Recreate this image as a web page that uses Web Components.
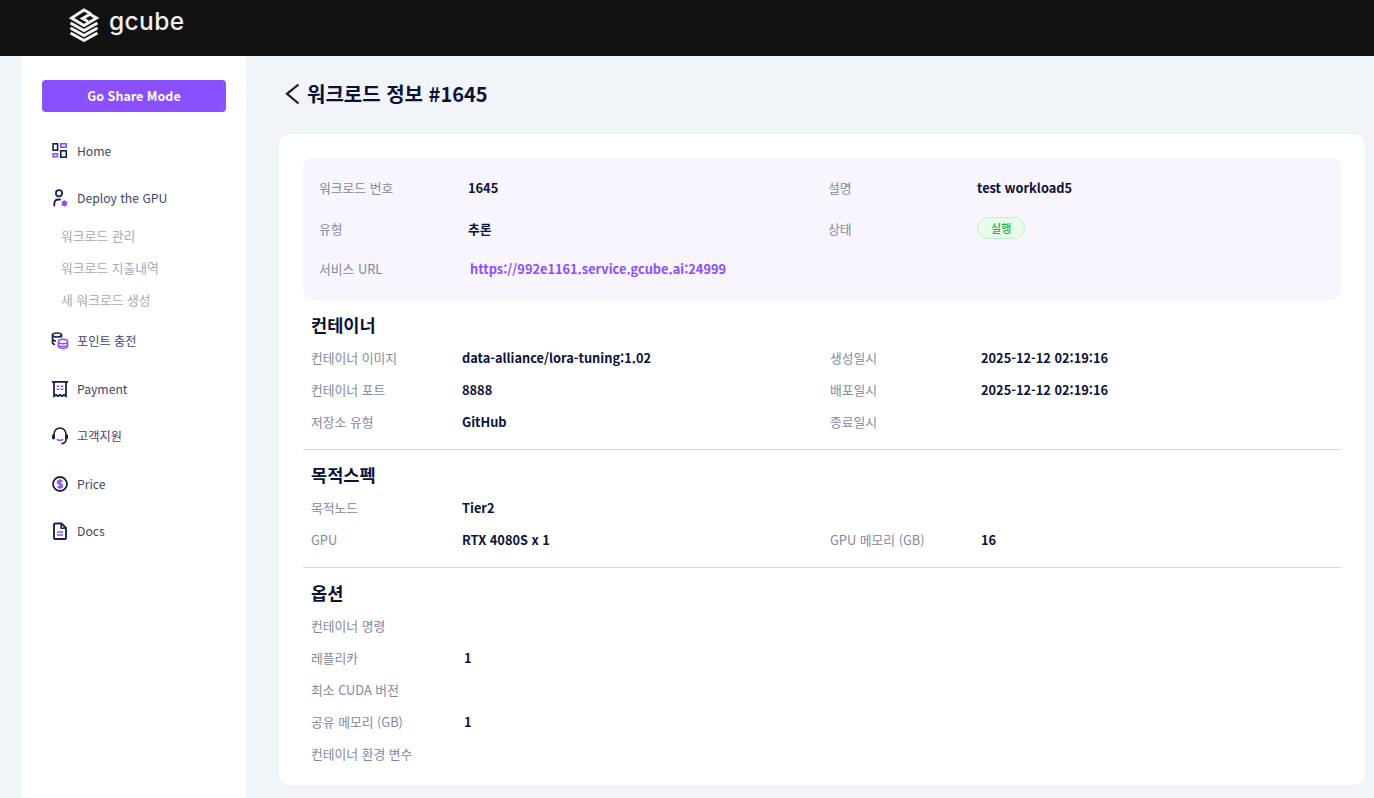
<!DOCTYPE html>
<html lang="ko">
<head>
<meta charset="utf-8">
<title>워크로드 정보</title>
<style>
  html, body { margin: 0; height: 100%; }
  body {
    background: #f1f4f9;
    font-family: "Noto Sans CJK KR", "Noto Sans", sans-serif;
    overflow: hidden;
  }
</style>
</head>
<body>
<gc-app>
  <gc-header slot="header"></gc-header>
  <gc-sidebar slot="sidebar"></gc-sidebar>
  <gc-workload-detail>
    <gc-summary>
      <gc-field label="워크로드 번호" value="1645"></gc-field>
      <gc-field label="설명" value="test workload5"></gc-field>
      <gc-field label="유형" value="추론"></gc-field>
      <gc-field label="상태"><gc-badge>실행</gc-badge></gc-field>
      <gc-field label="서비스 URL" value="https://992e1161.service.gcube.ai:24999" link></gc-field>
    </gc-summary>
    <gc-section title="컨테이너">
      <gc-field label="컨테이너 이미지" value="data-alliance/lora-tuning:1.02"></gc-field>
      <gc-field label="생성일시" value="2025-12-12 02:19:16"></gc-field>
      <gc-field label="컨테이너 포트" value="8888"></gc-field>
      <gc-field label="배포일시" value="2025-12-12 02:19:16"></gc-field>
      <gc-field label="저장소 유형" value="GitHub"></gc-field>
      <gc-field label="종료일시"></gc-field>
    </gc-section>
    <gc-section title="목적스펙">
      <gc-field label="목적노드" value="Tier2"></gc-field>
      <gc-field></gc-field>
      <gc-field label="GPU" value="RTX 4080S x 1"></gc-field>
      <gc-field label="GPU 메모리 (GB)" value="16"></gc-field>
    </gc-section>
    <gc-section title="옵션" last>
      <gc-field label="컨테이너 명령"></gc-field>
      <gc-field></gc-field>
      <gc-field label="레플리카" value="1" nudge></gc-field>
      <gc-field></gc-field>
      <gc-field label="최소 CUDA 버전"></gc-field>
      <gc-field></gc-field>
      <gc-field label="공유 메모리 (GB)" value="1" nudge></gc-field>
      <gc-field></gc-field>
      <gc-field label="컨테이너 환경 변수"></gc-field>
    </gc-section>
  </gc-workload-detail>
</gc-app>

<script>
const PURPLE = '#8a4fff';
const NAVY = '#1b2448';

const ICONS = {
  home: `<svg width="18" height="18" viewBox="0 0 18 18" fill="none" stroke-width="1.6">
    <rect x="2.100" y="1.800" width="4.500" height="6.400" stroke="${NAVY}"/>
    <rect x="9.800" y="8.800" width="5.400" height="6.400" stroke="${NAVY}"/>
    <rect x="9.800" y="1.800" width="5.400" height="3.400" stroke="${PURPLE}"/>
    <rect x="2.100" y="11.800" width="4.500" height="2.900" stroke="${PURPLE}"/>
  </svg>`,
  deploy: `<svg width="18" height="18" viewBox="0 0 18 18" fill="none">
    <circle cx="8" cy="4.200" r="3.100" stroke="${NAVY}" stroke-width="1.800"/>
    <path d="M3.300 16.500v-1.700c0-2.500 1.800-4.300 4.400-4.300h1.400" stroke="${NAVY}" stroke-width="1.800" stroke-linecap="round"/>
    <circle cx="13.400" cy="14.400" r="1.600" stroke="${PURPLE}" stroke-width="2"/>
    <path d="M13.400 11.200v6.400M10.600 12.800l5.600 3.200M10.600 16l5.600-3.200" stroke="${PURPLE}" stroke-width="1.100"/>
  </svg>`,
  point: `<svg width="18" height="18" viewBox="0 0 18 18" fill="none">
    <ellipse cx="6" cy="3" rx="4.500" ry="2" stroke="${NAVY}" stroke-width="1.700"/>
    <path d="M1.500 3v7.500c0 1 .9 1.700 2.500 2M10.500 3v2.500M1.500 7c0 1.100 1.500 2 3.500 2" stroke="${NAVY}" stroke-width="1.700"/>
    <path d="M7.400 9.500c0-1.300 2-2.300 4.600-2.300s4.600 1 4.600 2.300v4.600c0 1.300-2 2.300-4.600 2.300s-4.600-1-4.600-2.300zM7.400 9.500c0 1.300 2 2.300 4.600 2.300s4.600-1 4.600-2.300M7.400 12.200c0 1.300 2 2.300 4.600 2.300s4.600-1 4.600-2.300" stroke="${PURPLE}" stroke-width="1.500"/>
  </svg>`,
  payment: `<svg width="18" height="18" viewBox="0 0 18 18" fill="none">
    <path d="M1 1.900h16" stroke="${NAVY}" stroke-width="1.800"/>
    <path d="M3 1.900v14.200l2-1.200 2 1.200 2-1.200 2 1.200 2-1.200 2 1.200V1.900" stroke="${NAVY}" stroke-width="1.800"/>
    <path d="M5.800 6.200h2.500M9.800 6.200h2.500M5.800 9.200h2.500M9.800 9.200h2.500" stroke="${PURPLE}" stroke-width="1.600"/>
  </svg>`,
  support: `<svg width="18" height="18" viewBox="0 0 18 18" fill="none">
    <path d="M3 8V7a6 6 0 0 1 12 0v5.500c0 2.200-1.500 3.700-3.800 4.100" stroke="${NAVY}" stroke-width="1.700" stroke-linecap="round"/>
    <rect x="1" y="7.200" width="3" height="5.300" rx="1.400" fill="${NAVY}"/>
    <rect x="14" y="7.200" width="3" height="5.300" rx="1.400" fill="${NAVY}"/>
    <path d="M6.400 12.600c1.500 1 3.700 1 5.200 0" stroke="${PURPLE}" stroke-width="1.700" stroke-linecap="round"/>
  </svg>`,
  price: `<svg width="18" height="18" viewBox="0 0 18 18" fill="none">
    <circle cx="9" cy="9" r="7" stroke="${NAVY}" stroke-width="1.800"/>
    <path d="M11.400 6.800c-.4-.8-1.300-1.300-2.400-1.300-1.400 0-2.400.7-2.400 1.800S7.600 8.800 9 9s2.400.7 2.400 1.800-1 1.800-2.400 1.800c-1.100 0-2-.5-2.400-1.300M9 4.200v9.600" stroke="${PURPLE}" stroke-width="1.700"/>
  </svg>`,
  docs: `<svg width="18" height="18" viewBox="0 0 18 18" fill="none">
    <path d="M3 2.600c0-.6.5-1.100 1.100-1.100h6.400l4.500 4.500v9.900c0 .6-.5 1.100-1.100 1.100H4.100c-.6 0-1.100-.5-1.100-1.100z" stroke="${NAVY}" stroke-width="1.900" stroke-linejoin="round"/>
    <path d="M10.200 1.500v4.700h4.800" stroke="${NAVY}" stroke-width="1.600"/>
    <path d="M6 10h6M6 13h6" stroke="${PURPLE}" stroke-width="1.600"/>
  </svg>`
};

class GcApp extends HTMLElement {
  constructor() {
    super();
    this.attachShadow({ mode: 'open' });
    this.shadowRoot.innerHTML = `
      <style>
        :host { display: flex; flex-direction: column; height: 100vh; }
        .body { flex: 1; display: flex; min-height: 0; padding-left: 22px; }
        main { flex: 1; min-width: 0; }
      </style>
      <slot name="header"></slot>
      <div class="body">
        <slot name="sidebar"></slot>
        <main><slot></slot></main>
      </div>
    `;
  }
}

class GcHeader extends HTMLElement {
  constructor() {
    super();
    this.attachShadow({ mode: 'open' });
    this.shadowRoot.innerHTML = `
      <style>
        :host { display: flex; align-items: flex-start; height: 56px; background: #111; padding-left: 69px; flex: none; }
        .logo { display: flex; align-items: flex-start; gap: 10px; margin-top: 8px; }
        .word { font: 500 24.500px/30px Inter, sans-serif; letter-spacing: .4px; color: #efefef; margin-top: -2px; }
      </style>
      <div class="logo">
        <svg width="30" height="34" viewBox="0 0 30 34" fill="none" stroke="#f2f2f2" stroke-width="2.900" stroke-linejoin="miter">
          <path d="M22 6 15 2 2.500 10 15 17.500 27.500 10 21 6.200 13.500 10.500 19 13.500"/>
          <path d="M1.500 15 15 22.500 28.500 15"/>
          <path d="M1.500 20 15 27.500 28.500 20"/>
          <path d="M1.500 25 15 32.500 28.500 25"/>
        </svg>
        <span class="word">gcube</span>
      </div>
    `;
  }
}

class GcSidebar extends HTMLElement {
  constructor() {
    super();
    this.attachShadow({ mode: 'open' });
    const items = [
      ['home', 'Home'],
      ['deploy', 'Deploy the GPU', ['워크로드 관리', '워크로드 지출내역', '새 워크로드 생성']],
      ['point', '포인트 충전'],
      ['payment', 'Payment'],
      ['support', '고객지원'],
      ['price', 'Price'],
      ['docs', 'Docs']
    ];
    this.shadowRoot.innerHTML = `
      <style>
        :host { display: block; width: 224px; height: 100%; background: #fff; box-sizing: border-box; padding: 24px 20px 0; flex: none; }
        button {
          display: block; width: 100%; height: 32px; border: 0; border-radius: 4px;
          background: ${PURPLE}; color: #fff; font: 700 12.500px/32px "Noto Sans CJK KR", sans-serif; padding: 0;
        }
        nav { display: flex; flex-direction: column; margin-top: 15px; }
        .item { display: flex; align-items: center; gap: 8px; height: 47.400px; padding-left: 9px; font-size: 12.200px; color: #3f4566; }
        .item:first-child { height: 47.100px; }
        .item svg { flex: none; }
        .subs { display: flex; flex-direction: column; margin-top: -1.700px; padding-bottom: 2px; }
        .sub { height: 32px; line-height: 32px; padding-left: 19px; font-size: 12.800px; color: #a6a8ba; }
      </style>
      <button>Go Share Mode</button>
      <nav>
        ${items.map(([icon, label, subs]) => `
          <div class="item">${ICONS[icon]}<span>${label}</span></div>
          ${subs ? `<div class="subs">${subs.map(s => `<div class="sub">${s}</div>`).join('')}</div>` : ''}
        `).join('')}
      </nav>
    `;
  }
}

class GcWorkloadDetail extends HTMLElement {
  constructor() {
    super();
    this.attachShadow({ mode: 'open' });
    this.shadowRoot.innerHTML = `
      <style>
        :host { display: block; padding: 0 9px 0 33px; }
        .title { display: flex; align-items: center; gap: 6px; height: 75px; margin-bottom: 3px; font-size: 20px; font-weight: 700; color: #0b1238; }
        .card { background: #fff; border-radius: 10px; padding: 24px 24px 0; height: 651px; box-sizing: border-box; box-shadow: 0 0 2px rgba(30,40,80,.06); }
      </style>
      <div class="title">
        <svg width="22" height="22" viewBox="0 0 22 22" fill="none" stroke="#1a1a1a" stroke-width="2.200"><path d="M19.500 1.500 8 10.800l11.500 9.700"/></svg>
        <span>워크로드 정보 #1645</span>
      </div>
      <div class="card"><slot></slot></div>
    `;
  }
}

class GcSummary extends HTMLElement {
  constructor() {
    super();
    this.attachShadow({ mode: 'open' });
    this.shadowRoot.innerHTML = `
      <style>
        :host { display: grid; grid-template-columns: 509px 1fr; grid-template-rows: 41px 40px 40px; --label-w: 149px;
          background: #f8f5fe; border-radius: 8px; padding: 10px 16px 10px; height: 142px; box-sizing: border-box; }
      </style>
      <slot></slot>
    `;
  }
}

class GcSection extends HTMLElement {
  static get observedAttributes() { return ['title']; }
  constructor() {
    super();
    this.attachShadow({ mode: 'open' });
    this.shadowRoot.innerHTML = `
      <style>
        :host { display: block; border-bottom: 1px solid #d9d9dd; padding: 7px 8px 11px; --label-w: 151px; }
        :host([last]) { border-bottom: 0; }
        h3 { margin: 0 0 -1px; font-size: 17.600px; font-weight: 700; line-height: 36px; color: #0b1238; }
        .rows { display: grid; grid-template-columns: 519px 1fr; grid-auto-rows: 32px; }
      </style>
      <h3></h3>
      <div class="rows"><slot></slot></div>
    `;
  }
  attributeChangedCallback(name, oldValue, value) {
    this.shadowRoot.querySelector('h3').textContent = value;
  }
}

class GcField extends HTMLElement {
  connectedCallback() {
    if (this.shadowRoot) return;
    this.attachShadow({ mode: 'open' });
    const label = this.getAttribute('label') || '';
    const value = this.getAttribute('value') || '';
    const isLink = this.hasAttribute('link');
    this.shadowRoot.innerHTML = `
      <style>
        :host { display: flex; align-items: center; font-size: 12.800px; min-width: 0; padding-bottom: 2px; box-sizing: border-box; }
        .label { flex: none; width: var(--label-w, 150px); color: #85879f; }
        .value { font-weight: 700; color: #0b1238; white-space: nowrap; }
        .link { color: ${PURPLE}; padding-left: 2px; }
        :host([nudge]) .value { padding-left: 2px; }
      </style>
      <span class="label">${label}</span>
      <span class="value ${isLink ? 'link' : ''}">${value}<slot></slot></span>
    `;
  }
}

class GcBadge extends HTMLElement {
  constructor() {
    super();
    this.attachShadow({ mode: 'open' });
    this.shadowRoot.innerHTML = `
      <style>
        :host { display: inline-flex; align-items: center; justify-content: center; width: 48px; height: 22px; box-sizing: border-box;
          background: #e8fcea; border: 1px solid #bff2cc; border-radius: 11px; color: #16b34f; font-size: 11.200px; font-weight: 500; margin-top: -4px; }
      </style>
      <slot></slot>
    `;
  }
}

customElements.define('gc-app', GcApp);
customElements.define('gc-header', GcHeader);
customElements.define('gc-sidebar', GcSidebar);
customElements.define('gc-workload-detail', GcWorkloadDetail);
customElements.define('gc-summary', GcSummary);
customElements.define('gc-section', GcSection);
customElements.define('gc-field', GcField);
customElements.define('gc-badge', GcBadge);
</script>
</body>
</html>
